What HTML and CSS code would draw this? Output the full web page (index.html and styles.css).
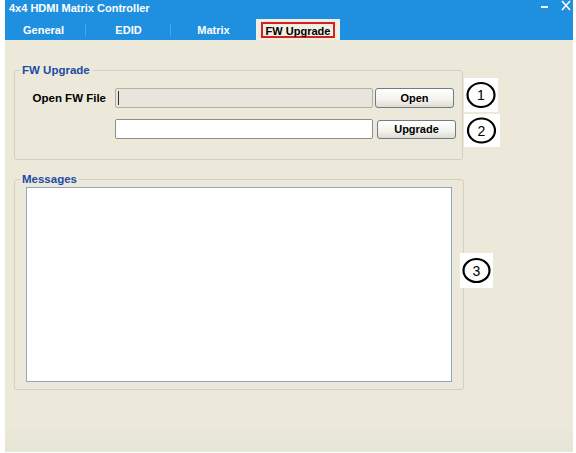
FILE: index.html
```html
<!DOCTYPE html>
<html>
<head>
<meta charset="utf-8">
<link rel="stylesheet" href="styles.css">
</head>
<body>
<div class="window">
  <div class="titlebar">
    <span class="title">4x4 HDMI Matrix Controller</span>
    <span class="controls">
      <svg class="ctl" width="10" height="12" viewBox="0 0 10 12"><line x1="1" y1="7" x2="8" y2="7" stroke="#fff" stroke-width="2"/></svg>
      <svg class="ctl" width="10" height="12" viewBox="0 0 10 12"><path d="M1 1 L9 10 M9 1 L1 10" stroke="#fff" stroke-width="1.6" fill="none"/></svg>
    </span>
  </div>
  <div class="tabs">
    <div class="tab first">General</div>
    <div class="sep"></div>
    <div class="tab">EDID</div>
    <div class="sep"></div>
    <div class="tab">Matrix</div>
    <div class="tab active"><span class="mark">FW Upgrade</span></div>
  </div>
  <div class="content">
    <fieldset class="group fw">
      <legend>FW Upgrade</legend>
      <div class="row">
        <span class="lbl">Open FW File</span>
        <div class="field disabled"><span class="caret"></span></div>
        <button class="btn open">Open</button>
      </div>
      <div class="row second">
        <span class="lbl"></span>
        <div class="field"></div>
        <button class="btn up">Upgrade</button>
      </div>
    </fieldset>
    <fieldset class="group msgs">
      <legend>Messages</legend>
      <div class="msgbox"></div>
    </fieldset>
  </div>
  <div class="statusbar"></div>

  <div class="badge b1">
    <svg width="34" height="34" viewBox="0 0 34 34"><ellipse cx="17" cy="17" rx="13.5" ry="12" fill="none" stroke="#000" stroke-width="2.2"/></svg>
    <span class="num">1</span>
  </div>
  <div class="badge b2">
    <svg width="36" height="33" viewBox="0 0 36 33"><ellipse cx="17.5" cy="16.5" rx="13.5" ry="12" fill="none" stroke="#000" stroke-width="2.2"/></svg>
    <span class="num">2</span>
  </div>
  <div class="badge b3">
    <svg width="33" height="35" viewBox="0 0 33 35"><ellipse cx="16.5" cy="17.5" rx="13" ry="11.5" fill="none" stroke="#000" stroke-width="2.2"/></svg>
    <span class="num">3</span>
  </div>
</div>
</body>
</html>
```

FILE: styles.css
```css
* { box-sizing: border-box; }
html, body { margin: 0; padding: 0; background: #ffffff; }
body {
  font-family: "Liberation Sans", Arial, sans-serif;
  font-size: 11px;
  width: 576px;
  height: 453px;
  overflow: hidden;
}
.window {
  position: relative;
  margin-left: 5px;
  width: 568px;
  height: 452px;
  background: #ece9da;
  display: flex;
  flex-direction: column;
}
.titlebar {
  height: 19px;
  background: #1f8fe0;
  display: flex;
  justify-content: space-between;
  align-items: flex-start;
  padding-left: 4px;
}
.title {
  color: #fff;
  font-weight: bold;
  font-size: 11px;
  line-height: 16px;
}
.controls {
  display: flex;
  gap: 11px;
  padding-right: 2px;
}
.ctl { display: block; }
.tabs {
  height: 21px;
  background: #1f8fe0;
  display: flex;
  align-items: stretch;
}
.tab {
  width: 85px;
  color: #fff;
  font-weight: bold;
  font-size: 11px;
  text-align: center;
  line-height: 21px;
  padding-top: 1px;
}
.tab.first { width: 81px; padding-right: 4px; }
.sep {
  width: 1px;
  align-self: center;
  height: 12px;
  margin-left: -1px;
  background: rgba(255,255,255,0.22);
}
.tab.active {
  width: 84px;
  background: #f1efe4;
  color: #000;
  padding-top: 3px;
  line-height: 14px;
}
.mark {
  display: inline-block;
  border: 2px solid #d42020;
  padding: 1px 3px 0 3px;
  line-height: 12px;
  height: 16px;
}
.content {
  flex: 1;
  padding-top: 24px;
}
.group {
  margin: 0 0 0 9px;
  width: 450px;
  padding: 0;
  border: 1px solid #d3d0bf;
  border-radius: 3px;
  min-width: 0;
}
.group legend {
  margin-left: 5px;
  padding: 0 2px;
  font-weight: bold;
  font-size: 11.5px;
  line-height: 13px;
  color: #1d4aa6;
}
.fw {
  width: 449px;
  padding: 11px 0 20px 0;
}
.row {
  display: flex;
  align-items: center;
  height: 20px;
}
.row.second { margin-top: 11px; }
.lbl {
  width: 91px;
  margin-right: 9px;
  text-align: right;
  font-weight: bold;
  font-size: 11.5px;
  color: #000;
}
.field {
  width: 258px;
  height: 20px;
  border: 1px solid #8e8e86;
  border-radius: 2px;
  background: #ffffff;
  display: flex;
  align-items: center;
  padding-left: 2px;
}
.field.disabled {
  background: #e7e5dc;
  border-color: #b3b1a6;
}
.caret {
  width: 1px;
  height: 14px;
  background: #333;
}
.btn {
  width: 79px;
  height: 20px;
  margin: 0 0 0 2px;
  padding: 0;
  border: 1px solid #6f7b8a;
  border-radius: 3px;
  background: linear-gradient(#ffffff, #f3f2ec 60%, #dedcd2);
  font-family: "Liberation Sans", Arial, sans-serif;
  font-weight: bold;
  font-size: 11px;
  color: #000;
}
.btn.up {
  margin-left: 4px;
  height: 19px;
}
.msgs {
  margin-top: 13px;
  padding: 1px 0 7px 0;
}
.msgbox {
  margin-left: 11px;
  width: 426px;
  height: 195px;
  background: #fff;
  border: 1px solid #8fa7bf;
}
.statusbar {
  height: 25px;
  background: linear-gradient(#e9e8d9, #e6e5d6);
}
.badge {
  position: absolute;
  background: #fff;
}
.badge svg { display: block; }
.num {
  position: absolute;
  left: 0; right: 0; top: 0; bottom: 0;
  display: flex;
  align-items: center;
  justify-content: center;
  font-family: "Liberation Sans", Arial, sans-serif;
  font-size: 14px;
  color: #000;
}
.b1 { left: 459px; top: 78px; width: 34px; height: 34px; }
.b2 { left: 459px; top: 114px; width: 36px; height: 33px; }
.b2 .num { padding-right: 1px; }
.b3 { left: 455px; top: 253px; width: 33px; height: 35px; }
```
